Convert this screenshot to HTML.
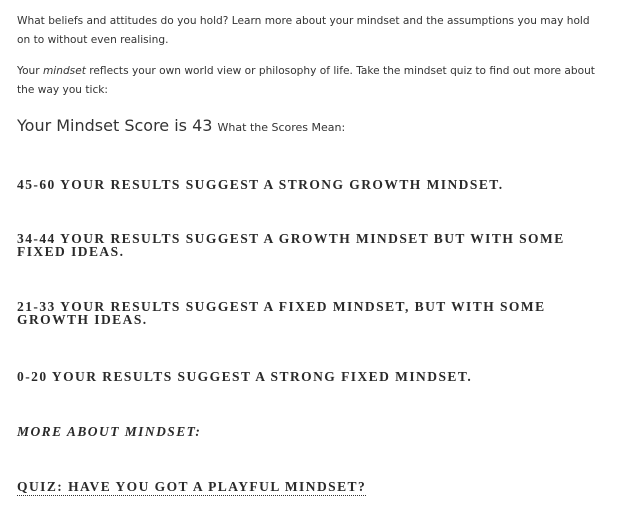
<!DOCTYPE html>
<html><head><meta charset="utf-8"><style>
body{margin:0;width:619px;height:515px;background:#fff;position:relative;overflow:hidden}
.p{position:absolute;left:17px;font-family:"DejaVu Sans","Liberation Sans",sans-serif;font-size:10.6px;color:#333;line-height:19px;width:581px}
.h{position:absolute;left:17px;font-family:"Liberation Serif",serif;font-weight:bold;font-size:13.5px;letter-spacing:1.45px;color:#2a2a2a;line-height:13px;width:560px}
</style></head><body>
<div class="p" style="top:12px">What beliefs and attitudes do you hold? Learn more about your mindset and the assumptions you may hold on to without even realising.</div>
<div class="p" style="top:62px">Your <i>mindset</i> reflects your own world view or philosophy of life. Take the mindset quiz to find out more about the way you tick:</div>
<div class="p" style="top:115px;font-size:16px;line-height:22px;color:#333">Your Mindset Score is 43 <span style="font-size:11px">What the Scores Mean:</span></div>
<div class="h" style="top:178px">45-60 YOUR RESULTS SUGGEST A STRONG GROWTH MINDSET.</div>
<div class="h" style="top:232px">34-44 YOUR RESULTS SUGGEST A GROWTH MINDSET BUT WITH SOME FIXED IDEAS.</div>
<div class="h" style="top:300px">21-33 YOUR RESULTS SUGGEST A FIXED MINDSET, BUT WITH SOME GROWTH IDEAS.</div>
<div class="h" style="top:370px">0-20 YOUR RESULTS SUGGEST A STRONG FIXED MINDSET.</div>
<div class="h" style="top:425px;font-style:italic">MORE ABOUT MINDSET:</div>
<div class="h" style="top:480px"><span style="border-bottom:1px dotted #333;padding-bottom:1px">QUIZ: HAVE YOU GOT A PLAYFUL MINDSET?</span></div>
</body></html>
